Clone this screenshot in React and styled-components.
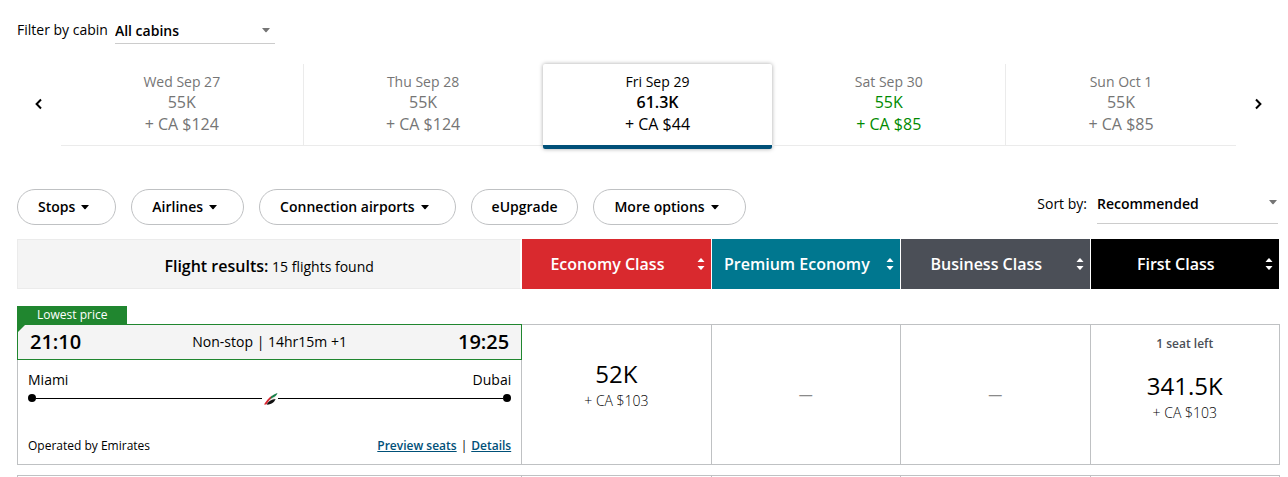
import { useState } from "react";
import styled, { createGlobalStyle, css } from "styled-components";

const days = [
    { id: 1, date: "Wed Sep 27", points: "55K", cash: "+ CA $124", divider: true },
    { id: 2, date: "Thu Sep 28", points: "55K", cash: "+ CA $124" },
    { id: 3, date: "Fri Sep 29", points: "61.3K", cash: "+ CA $44" },
    { id: 4, date: "Sat Sep 30", points: "55K", cash: "+ CA $85", cheapest: true, divider: true },
    { id: 5, date: "Sun Oct 1", points: "55K", cash: "+ CA $85" },
]

const filters = [
    { label: "Stops", menu: true },
    { label: "Airlines", menu: true },
    { label: "Connection airports", menu: true },
    { label: "eUpgrade", menu: false },
    { label: "More options", menu: true },
]

const cabins = [
    { name: "Economy Class", color: "#d9292e" },
    { name: "Premium Economy", color: "#00778f" },
    { name: "Business Class", color: "#4b4f57" },
    { name: "First Class", color: "#000" },
]

const fares = [
    { cabin: "Economy Class", points: "52K", cash: "+ CA $103" },
    { cabin: "Premium Economy" },
    { cabin: "Business Class" },
    { cabin: "First Class", points: "341.5K", cash: "+ CA $103", seats: "1 seat left" },
]

const Caret = () => (
    <svg width="10" height="5" viewBox="0 0 10 5" aria-hidden="true">
        <path d="M1 0h8L5.6 3.9a.8.8 0 0 1-1.2 0z" fill="currentColor" />
    </svg>
)

const Chevron = ({ flip }) => (
    <svg width="8" height="12" viewBox="0 0 8 12" fill="none" stroke="#000" strokeWidth="2" aria-hidden="true">
        <path d={flip ? "M2 1.5L6.4 6L2 10.5" : "M6 1.5L1.6 6L6 10.5"} />
    </svg>
)

const SortArrows = () => (
    <svg width="8" height="14" viewBox="0 0 8 14" fill="#fff" aria-hidden="true">
        <path d="M.5 5L3.4 1.6a.8.8 0 0 1 1.2 0L7.5 5z" />
        <path d="M.5 9h7l-2.9 3.4a.8.8 0 0 1-1.2 0z" />
    </svg>
)

const EmiratesTail = () => (
    <svg width="16" height="16" viewBox="0 0 16 16" aria-hidden="true">
        <path d="M2 14.5C5 10 10 4.5 15.5 3C14.5 6 13 8 12 9.5C10 12.5 8 14 4 14.5z" fill="#efebe8" />
        <path d="M2 14.5C4 11 7 7.6 10 5.4L9 8.4C7 10.4 5.4 12.6 4.4 14.6z" fill="#d9252f" />
        <path d="M9 6.8C11 5 13 3.8 15.5 3C14.8 5 13 6.6 11 7.6C10 8.2 9.2 8.6 8.4 9.4z" fill="#14814a" />
        <path d="M5.4 13.2C6.8 11 9.6 9.6 13.6 9C12.6 12 10 14 5 14.7z" fill="#111" />
    </svg>
)

function DateStrip() {
    const [selected, setSelected] = useState(3)

    return (
        <Strip>
            <ArrowButton type="button" aria-label="Previous dates"><Chevron /></ArrowButton>
            <Days>
                {days.map((day) => (
                    <Day
                        key={day.id}
                        type="button"
                        $selected={day.id === selected}
                        $cheapest={day.cheapest}
                        $divider={day.divider}
                        onClick={() => setSelected(day.id)}
                    >
                        <DayDate>{day.date}</DayDate>
                        <DayPoints>{day.points}</DayPoints>
                        <DayCash>{day.cash}</DayCash>
                    </Day>
                ))}
            </Days>
            <ArrowButton type="button" aria-label="Next dates"><Chevron flip /></ArrowButton>
        </Strip>
    )
}

function FlightCard() {
    return (
        <FlightCell>
            <FlightTimes>
                <Time>21:10</Time>
                <span>Non-stop | 14hr15m +1</span>
                <Time>19:25</Time>
            </FlightTimes>
            <FlightBody>
                <Spread>
                    <span>Miami</span>
                    <span>Dubai</span>
                </Spread>
                <Route>
                    <Dot />
                    <Line />
                    <EmiratesTail />
                    <Line />
                    <Dot />
                </Route>
                <Operator>
                    <span>Operated by Emirates</span>
                    <Links>
                        <Link href="#seats">Preview seats</Link>
                        <span>|</span>
                        <Link href="#details">Details</Link>
                    </Links>
                </Operator>
            </FlightBody>
        </FlightCell>
    )
}

export default function App() {
    return (
        <Page>
            <GlobalStyle />
            <CabinFilter>
                <label htmlFor="cabin">Filter by cabin</label>
                <CabinSelect>
                    <select id="cabin" defaultValue="all">
                        <option value="all">All cabins</option>
                        <option value="economy">Economy Class</option>
                        <option value="business">Business Class</option>
                    </select>
                    <Caret />
                </CabinSelect>
            </CabinFilter>

            <DateStrip />

            <Toolbar>
                <Chips>
                    {filters.map((filter) => (
                        <Chip key={filter.label} type="button">
                            {filter.label}
                            {filter.menu && <Caret />}
                        </Chip>
                    ))}
                </Chips>
                <Sort>
                    <label htmlFor="sort">Sort by:</label>
                    <SortSelect>
                        <select id="sort" defaultValue="recommended">
                            <option value="recommended">Recommended</option>
                            <option value="duration">Duration</option>
                        </select>
                        <Caret />
                    </SortSelect>
                </Sort>
            </Toolbar>

            <Results>
                <thead>
                    <tr>
                        <ResultsHead>
                            <strong>Flight results:</strong> 15 flights found
                        </ResultsHead>
                        {cabins.map((cabin) => (
                            <CabinHead key={cabin.name} $color={cabin.color}>
                                <CabinButton type="button">
                                    <span>{cabin.name}</span>
                                    <SortArrows />
                                </CabinButton>
                            </CabinHead>
                        ))}
                    </tr>
                </thead>
                <tbody>
                    <tr>
                        <BadgeCell colSpan={5}><Badge>Lowest price</Badge></BadgeCell>
                    </tr>
                    <tr>
                        <FlightCard />
                        {fares.map((fare) => (
                            <FareCell key={fare.cabin} $empty={!fare.points}>
                                {fare.seats && <Seats>{fare.seats}</Seats>}
                                {fare.points ? (
                                    <Fare $low={fare.seats}>
                                        <Points>{fare.points}</Points>
                                        <Cash>{fare.cash}</Cash>
                                    </Fare>
                                ) : "—"}
                            </FareCell>
                        ))}
                    </tr>
                </tbody>
                <tbody>
                    <tr>
                        <GapCell colSpan={5} />
                    </tr>
                    <tr>
                        <NextCell $first />
                        {cabins.map((cabin) => <NextCell key={cabin.name} />)}
                    </tr>
                </tbody>
            </Results>
        </Page>
    )
}

const GlobalStyle = createGlobalStyle`
    *, *::before, *::after {
        box-sizing: border-box;
    }
    body {
        margin: 0;
        background: #fff;
        color: #000;
        font: 14px/20px "Open Sans", sans-serif;
    }
    button, select {
        font: inherit;
        color: inherit;
        background: none;
        border: none;
        padding: 0;
        margin: 0;
        cursor: pointer;
    }
    svg {
        display: block;
        flex: none;
    }
`

const Page = styled.main`
    padding: 19px 8px 0 17px;
`

const CabinFilter = styled.div`
    display: flex;
    align-items: flex-start;
    gap: 7px;
    line-height: 22px;
`

const SelectBox = styled.div`
    position: relative;
    border-bottom: 1px solid #ccc;
    color: #757575;

    select {
        appearance: none;
        display: block;
        width: 100%;
        height: 24px;
        color: #000;
        font-weight: 600;
    }
    svg {
        position: absolute;
        pointer-events: none;
    }
`

const CabinSelect = styled(SelectBox)`
    width: 160px;

    svg {
        right: 4px;
        top: 9px;
    }
`

const SortSelect = styled(SelectBox)`
    width: 181px;

    select {
        height: 34px;
        padding-bottom: 4px;
    }
    svg {
        right: 0;
        top: 11px;
    }
`

const Strip = styled.div`
    display: flex;
    margin-top: 20px;
`

const ArrowButton = styled.button`
    display: flex;
    align-items: center;
    justify-content: center;
    width: 44px;
    padding-bottom: 2px;
`

const Days = styled.div`
    display: flex;
    flex: 1;
`

const Day = styled.button`
    display: flex;
    flex-direction: column;
    align-items: center;
    flex: 1 1 auto;
    padding: 8px 0 9px;
    color: #757575;
    border-bottom: 1px solid #ebebeb;
    border-right: ${(p) => (p.$divider ? "1px solid #ebebeb" : "none")};

    ${(p) => p.$cheapest && css`
        span + span {
            color: #008a00;
        }
    `}

    ${(p) => p.$selected && css`
        color: #000;
        margin-bottom: -3px;
        border-bottom: 4px solid #005078;
        border-radius: 2px;
        box-shadow: 0 0 4px rgba(0, 0, 0, 0.35);

        span:nth-child(2) {
            font-weight: 600;
        }
    `}
`

const DayDate = styled.span`
    line-height: 20px;
`

const DayPoints = styled.span`
    font-size: 16px;
    line-height: 20px;
`

const DayCash = styled.span`
    font-size: 16px;
    line-height: 24px;
`

const Toolbar = styled.div`
    display: flex;
    justify-content: space-between;
    align-items: flex-start;
    margin: 43px 0 14px;
`

const Chips = styled.div`
    display: flex;
    gap: 15px;
`

const Chip = styled.button`
    display: flex;
    align-items: center;
    gap: 5px;
    height: 36px;
    padding: 0 20px;
    border: 1px solid #bfc1c3;
    border-radius: 18px;
    font-weight: 600;

    svg {
        margin-right: 5px;
    }
`

const Sort = styled.div`
    display: flex;
    gap: 10px;
    padding-right: 2px;
    line-height: 30px;
`

const Results = styled.table`
    width: 100%;
    table-layout: fixed;
    border-collapse: separate;
    border-spacing: 0;
`

const ResultsHead = styled.th`
    width: 40%;
    height: 50px;
    padding: 4px 0 0;
    background: #f4f4f4;
    background-clip: padding-box;
    border: 1px solid #ebebeb;
    border-right: 2px solid #fff;
    font-weight: 400;

    strong {
        font-size: 16px;
        font-weight: 600;
    }
`

const CabinHead = styled.th`
    width: 15%;
    height: 50px;
    padding: 0;
    background: ${(p) => p.$color};
    border-right: 1px solid #fff;
`

const CabinButton = styled.button`
    display: flex;
    align-items: center;
    gap: 4px;
    width: 100%;
    height: 50px;
    padding-right: 6px;
    color: #fff;
    font-size: 16px;
    font-weight: 600;
    white-space: nowrap;

    span {
        flex: 1;
    }
`

const BadgeCell = styled.td`
    padding: 17px 0 0;
`

const Badge = styled.div`
    position: relative;
    width: max-content;
    height: 18px;
    padding: 0 20px;
    background: #20862f;
    color: #fff;
    font-size: 12px;
    font-weight: 500;
    line-height: 18px;

    /* folded corner hanging over the flight header */
    &::after {
        content: "";
        position: absolute;
        z-index: 1;
        left: 0;
        top: 100%;
        border-top: 9px solid #20862f;
        border-right: 9px solid transparent;
    }
`

const FlightCell = styled.td`
    padding: 0;
    border: 1px solid #bfc1c3;
    vertical-align: top;
`

const FlightTimes = styled.div`
    display: flex;
    justify-content: space-between;
    align-items: center;
    height: 36px;
    margin: -1px -1px 0;
    padding: 0 12px;
    background: #f4f4f4;
    border: 1px solid #20862f;
`

const Time = styled.span`
    font-size: 20px;
    font-weight: 600;
`

const FlightBody = styled.div`
    padding: 10px;
`

const Spread = styled.div`
    display: flex;
    justify-content: space-between;
`

const Route = styled.div`
    display: flex;
    align-items: center;
    height: 16px;
`

const Dot = styled.span`
    width: 8px;
    height: 8px;
    border-radius: 50%;
    background: #000;
`

const Line = styled.span`
    flex: 1;
    height: 1px;
    background: #000;
`

const Operator = styled(Spread)`
    margin-top: 32px;
    font-size: 12px;
    line-height: 16px;
`

const Links = styled.span`
    display: flex;
    gap: 4px;
`

const Link = styled.a`
    color: #005078;
    font-weight: 600;
`

const FareCell = styled.td`
    padding: 0;
    border: 1px solid #bfc1c3;
    border-left: none;
    text-align: center;
    vertical-align: ${(p) => (p.$empty ? "middle" : "top")};
    color: ${(p) => (p.$empty ? "#8a8a8a" : "#000")};
`

const Seats = styled.div`
    padding-top: 11px;
    color: #4b4f57;
    font-size: 12px;
    font-weight: 600;
    line-height: 16px;
`

const Fare = styled.div`
    padding-top: ${(p) => (p.$low ? "17px" : "32px")};
`

const Points = styled.div`
    font-size: 24px;
    line-height: 34px;
`

const Cash = styled.div`
    font-weight: 300;
`

const GapCell = styled.td`
    height: 10px;
    padding: 0;
`

const NextCell = styled.td`
    height: 2px;
    padding: 0;
    border: 1px solid #bfc1c3;
    border-bottom: none;
    border-left-width: ${(p) => (p.$first ? "1px" : "0")};
`
